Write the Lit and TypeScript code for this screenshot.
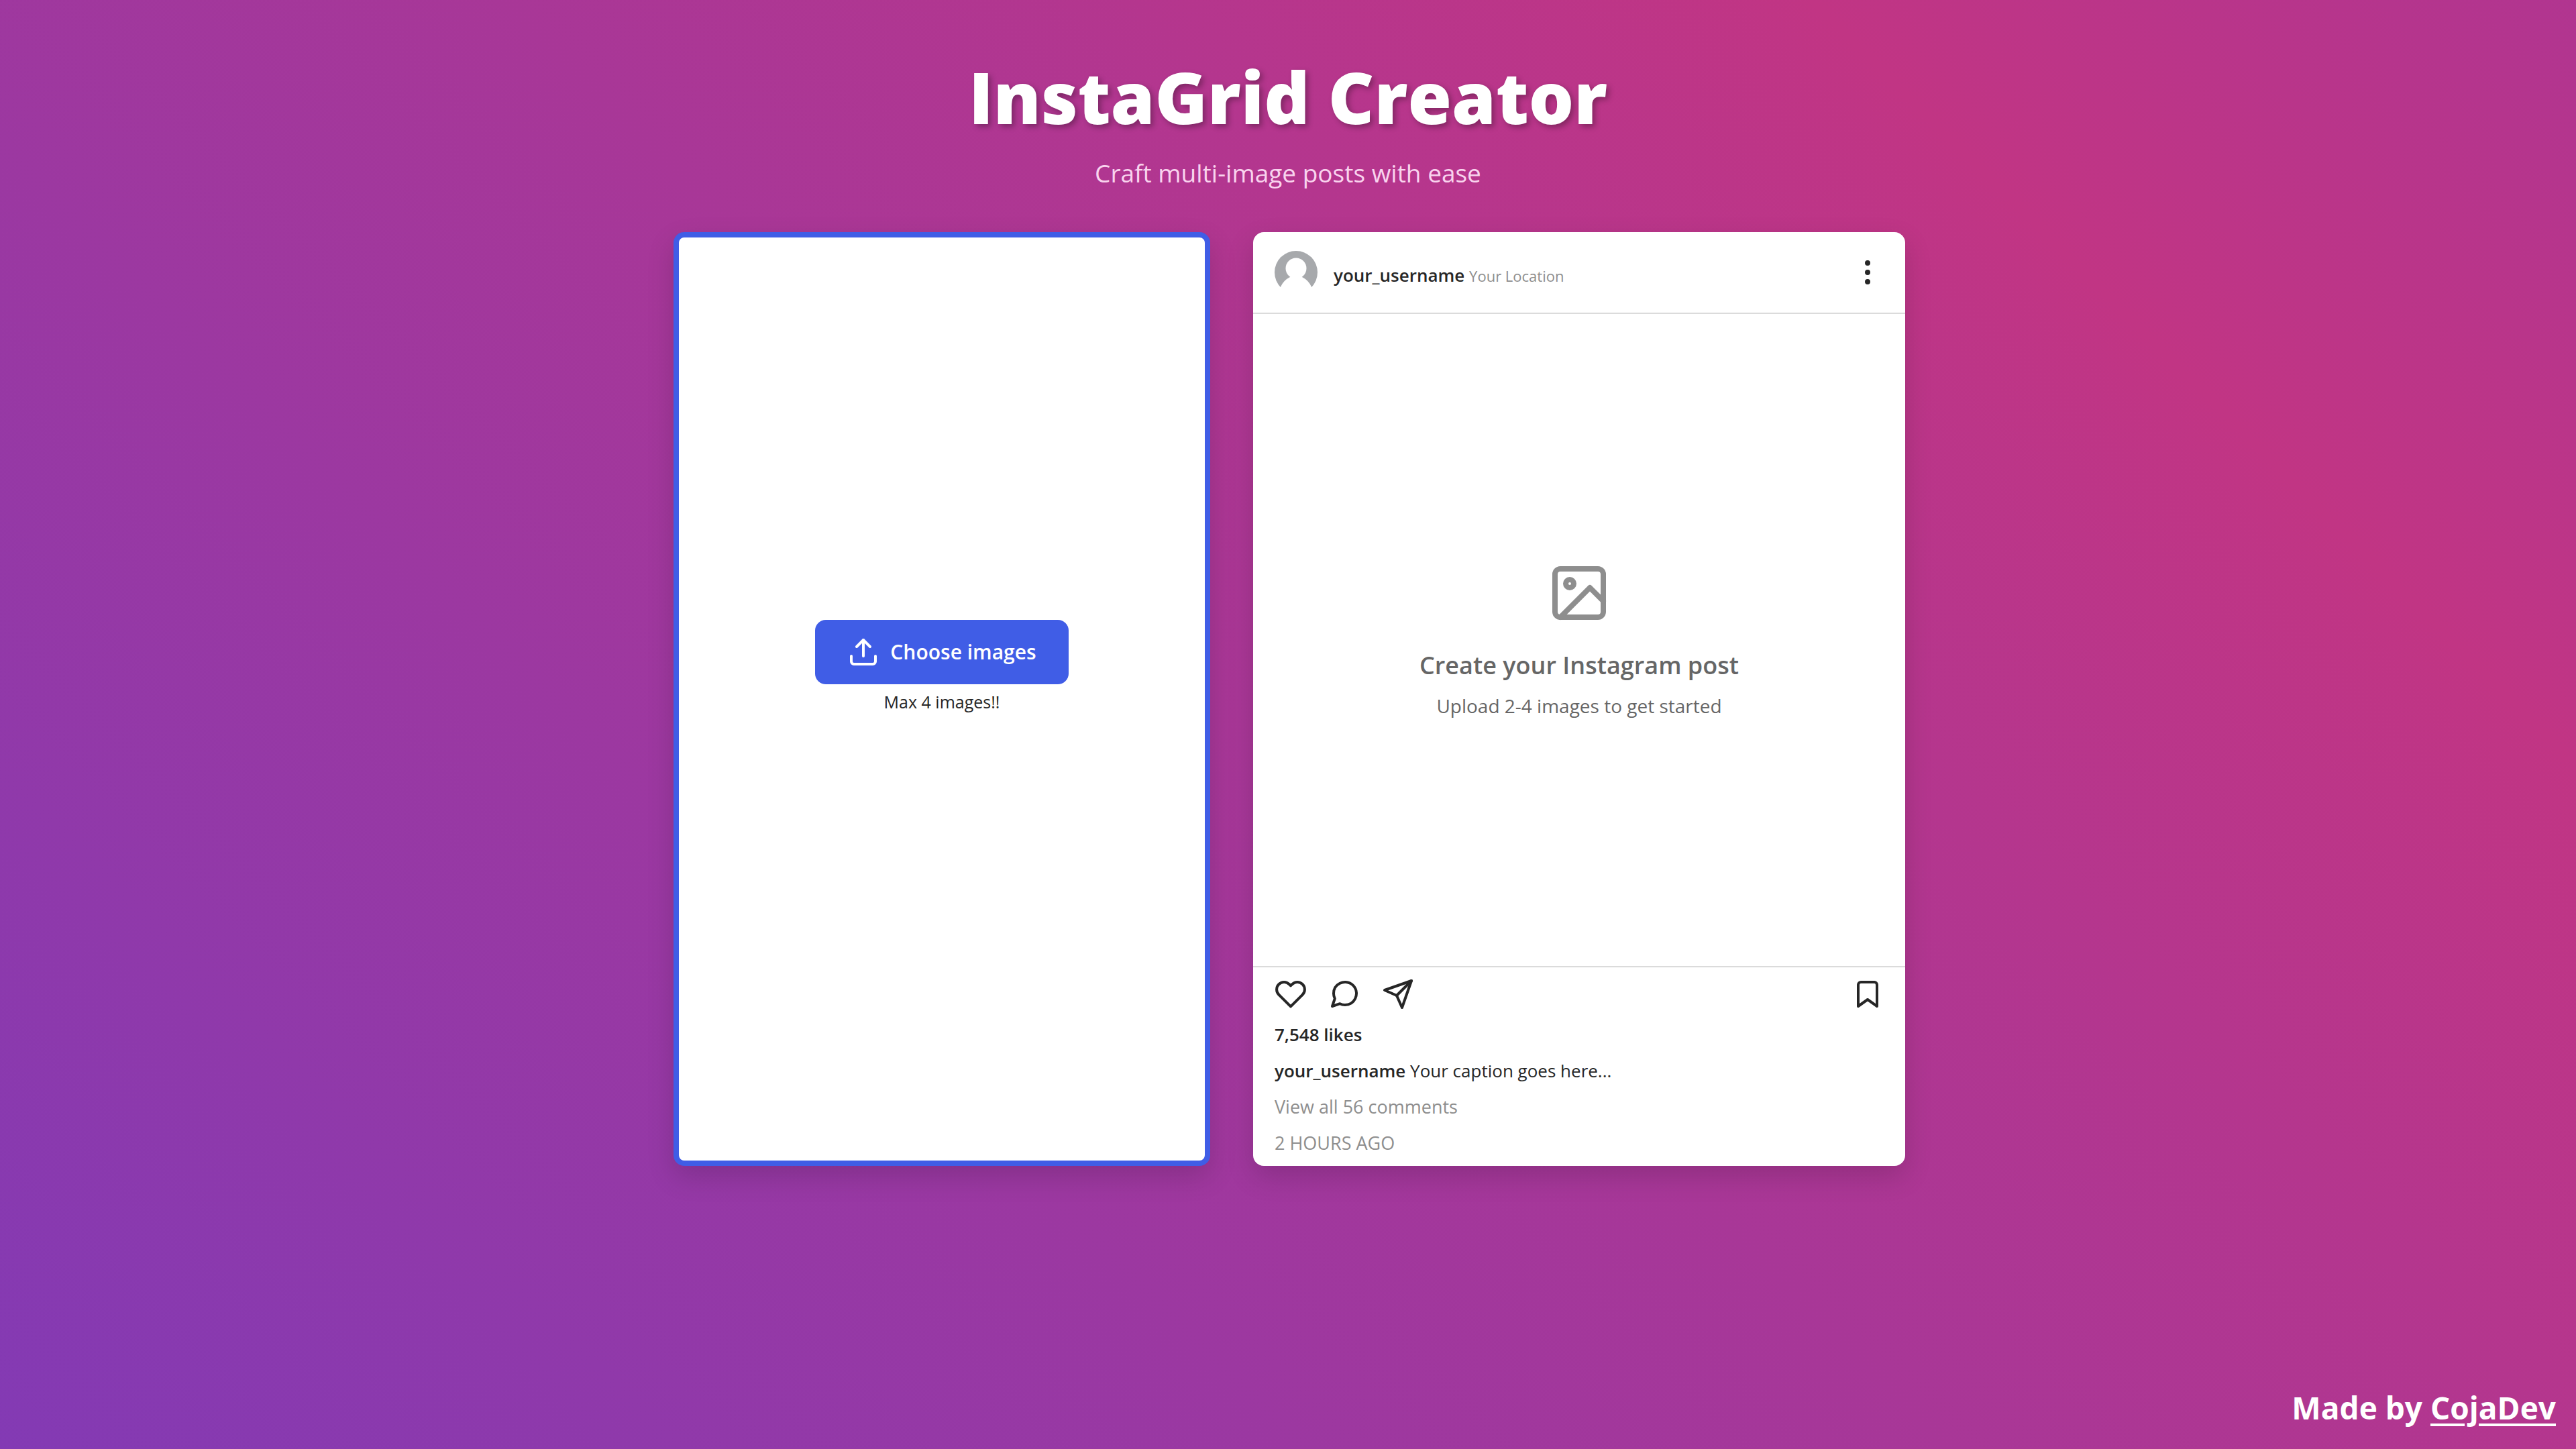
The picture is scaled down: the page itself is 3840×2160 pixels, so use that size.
import { LitElement, html, css, svg } from "lit";
import { customElement, property } from "lit/decorators.js";

const ICONS = {
  upload: svg`<path d="M21 15v4a2 2 0 0 1-2 2H5a2 2 0 0 1-2-2v-4"/><path d="M17 8l-5-5-5 5"/><path d="M12 3v12"/>`,
  image: svg`<rect x="3" y="3" width="18" height="18" rx="2"/><circle cx="8.5" cy="8.5" r="1.5"/><path d="M21 15l-5-5L5 21"/>`,
  more: svg`<circle cx="12" cy="5" r="1"/><circle cx="12" cy="12" r="1"/><circle cx="12" cy="19" r="1"/>`,
  heart: svg`<path d="M20.84 4.61a5.5 5.5 0 0 0-7.78 0L12 5.67l-1.06-1.06a5.5 5.5 0 0 0-7.78 7.78l1.06 1.06L12 21.23l7.78-7.78 1.06-1.06a5.5 5.5 0 0 0 0-7.78z"/>`,
  comment: svg`<path d="M21 11.5a8.38 8.38 0 0 1-.9 3.8 8.5 8.5 0 0 1-7.6 4.7 8.38 8.38 0 0 1-3.8-.9L3 21l1.9-5.7a8.38 8.38 0 0 1-.9-3.8 8.5 8.5 0 0 1 4.7-7.6 8.38 8.38 0 0 1 3.8-.9h.5a8.48 8.48 0 0 1 8 8v.5z"/>`,
  send: svg`<path d="M22 2L11 13"/><path d="M22 2l-7 20-4-9-9-4 20-7z"/>`,
  bookmark: svg`<path d="M19 21l-7-5-7 5V5a2 2 0 0 1 2-2h10a2 2 0 0 1 2 2z"/>`,
};

@customElement("line-icon")
class LineIcon extends LitElement {
  @property() name: keyof typeof ICONS = "image";

  static styles = css`
    :host { display: block; width: 48px; height: 48px; flex: none; }
    .glyph {
      display: block; width: 100%; height: 100%; fill: none; stroke: currentColor;
      stroke-width: 2; stroke-linecap: round; stroke-linejoin: round;
    }
  `;

  render() {
    return html`<svg class="glyph" viewBox="0 0 24 24" aria-hidden="true">${ICONS[this.name]}</svg>`;
  }
}

@customElement("upload-card")
class UploadCard extends LitElement {
  static styles = css`
    :host {
      display: flex; flex-direction: column; align-items: center; justify-content: center;
      gap: 8px; box-sizing: border-box; padding-bottom: 96px;
      background: #fff; border: 8px solid #405de6; border-radius: 16px;
      box-shadow: 0 16px 40px rgba(0, 0, 0, 0.15);
    }
    .choose {
      display: flex; align-items: center; gap: 16px; padding: 24px 48px;
      border: 0; border-radius: 16px; background: #405de6; color: #fff;
      font: 600 30px/48px "Open Sans", sans-serif; cursor: pointer;
    }
    .limit { margin: 0; font-size: 25px; line-height: 36px; color: #262626; }
  `;

  render() {
    return html`
      <button class="choose" type="button"><line-icon name="upload"></line-icon>Choose images</button>
      <p class="limit">Max 4 images!!</p>
    `;
  }
}

@customElement("post-preview")
class PostPreview extends LitElement {
  @property() username = "your_username";
  @property() location = "Your Location";
  @property() caption = "Your caption goes here...";

  static styles = css`
    :host {
      display: block; background: #fff; border-radius: 16px; color: #262626;
      font-size: 26px; line-height: 40px;
      box-shadow: 0 16px 40px rgba(0, 0, 0, 0.15);
    }
    .head {
      display: flex; align-items: center; gap: 24px;
      padding: 28px 32px; border-bottom: 2px solid #dbdbdb;
    }
    .avatar { display: block; width: 64px; height: 64px; flex: none; }
    .who { flex: 1; padding-top: 8px; }
    .name { font-weight: 600; }
    .place { font-size: 22px; color: #8e8e8e; }
    .tool { display: block; padding: 0; border: 0; background: none; color: inherit; cursor: pointer; }
    .canvas {
      aspect-ratio: 1; display: flex; flex-direction: column;
      align-items: center; justify-content: center; color: #666;
    }
    .picture { width: 96px; height: 96px; color: #8e8e8e; }
    .prompt { margin: 32px 0 12px; font-size: 36px; line-height: 56px; font-weight: 600; }
    .hint { margin: 0; font-size: 28px; }
    .foot { padding: 16px 32px 14px; border-top: 2px solid #dbdbdb; }
    .tools { display: flex; gap: 32px; margin-bottom: 16px; }
    .save { margin-left: auto; }
    .meta { display: flex; flex-direction: column; gap: 14px; }
    .line { margin: 0; }
    .muted { font-size: 27px; color: #8e8e8e; }
    .stamp { text-transform: uppercase; }
  `;

  private tool(icon: string, label: string, extra = "") {
    return html`<button class="tool ${extra}" type="button" aria-label=${label}><line-icon name=${icon}></line-icon></button>`;
  }

  render() {
    return html`
      <header class="head">
        <svg class="avatar" viewBox="0 0 64 64" aria-hidden="true">
          <circle cx="32" cy="32" r="32" fill="#a7a9ac"/>
          <circle cx="32" cy="26" r="15.5" fill="#fff"/>
          <path fill="#fff" d="M0 54H8.8Q13 44 23 39H41Q51 44 55.2 54H64V65H0Z"/>
        </svg>
        <div class="who"><span class="name">${this.username}</span> <span class="place">${this.location}</span></div>
        ${this.tool("more", "More options")}
      </header>
      <div class="canvas">
        <line-icon class="picture" name="image"></line-icon>
        <h2 class="prompt">Create your Instagram post</h2>
        <p class="hint">Upload 2-4 images to get started</p>
      </div>
      <footer class="foot">
        <div class="tools">
          ${this.tool("heart", "Like")}${this.tool("comment", "Comment")}${this.tool("send", "Share")}
          ${this.tool("bookmark", "Save", "save")}
        </div>
        <div class="meta">
          <p class="line name">7,548 likes</p>
          <p class="line"><span class="name">${this.username}</span> ${this.caption}</p>
          <p class="line muted">View all 56 comments</p>
          <p class="line muted stamp">2 hours ago</p>
        </div>
      </footer>
    `;
  }
}

@customElement("app-root")
class AppRoot extends LitElement {
  static styles = css`
    :host {
      display: flex; flex-direction: column; box-sizing: border-box; min-height: 100vh;
      padding: 80px 30px 30px;
      font-family: "Open Sans", "Noto Sans", sans-serif; color: #fff;
      background: linear-gradient(45deg, #833ab4, #c13584 81%, #b13590);
    }
    .intro { text-align: center; margin-bottom: 58px; }
    .title {
      margin: 0 0 20px; font-size: 106px; line-height: 128px; font-weight: 800;
      text-shadow: 4px 4px 8px rgba(0, 0, 0, 0.3);
    }
    .tagline { margin: 0; font-size: 37px; line-height: 60px; color: #f9d3ee; }
    .board {
      display: grid; grid-template-columns: minmax(0, 800px) minmax(0, 972px);
      gap: 64px; justify-content: end; width: 100%; max-width: 1840px; margin: 0 auto;
    }
    .credit {
      margin: auto 0 0; padding-top: 32px; text-align: right;
      font-size: 46px; line-height: 64px; font-weight: 700;
    }
    .author { color: inherit; text-decoration-thickness: 4px; text-underline-offset: 6px; }
  `;

  render() {
    return html`
      <header class="intro">
        <h1 class="title">InstaGrid Creator</h1>
        <p class="tagline">Craft multi-image posts with ease</p>
      </header>
      <main class="board">
        <upload-card></upload-card>
        <post-preview></post-preview>
      </main>
      <p class="credit">Made by <a class="author" href="#">CojaDev</a></p>
    `;
  }
}
